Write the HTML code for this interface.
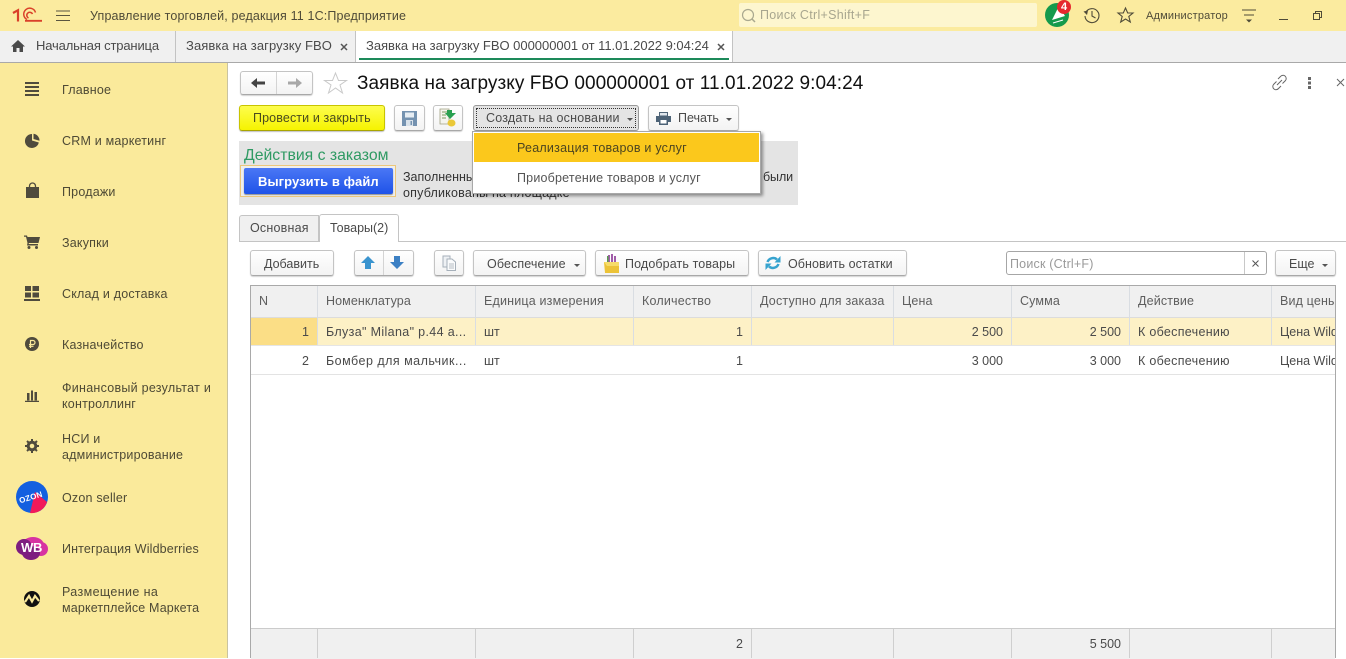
<!DOCTYPE html>
<html lang="ru"><head><meta charset="utf-8"><title>1С</title>
<style>
html,body{margin:0;padding:0}
body{width:1346px;height:658px;overflow:hidden;position:relative;background:#fff;font-family:"Liberation Sans",Arial,sans-serif;font-size:13px;color:#4a4a45}
.a{position:absolute}
.t{position:absolute;white-space:nowrap;line-height:16px}
.b{position:absolute;box-sizing:border-box;border:1px solid #c4c4c4;border-bottom-color:#a8a8a8;border-radius:3px;background:linear-gradient(#fff,#f3f3f3);box-shadow:0 1px 1px rgba(0,0,0,.18)}
.m{color:#4e4a35;font-size:12.5px;letter-spacing:.2px}
.h{color:#5e5e5e;font-size:12.5px;letter-spacing:.15px}
.c{color:#4a4a4a;font-size:12.5px}
.s{letter-spacing:.3px}
.r{text-align:right}
.v{position:absolute;width:1px}
.tr{position:absolute;width:0;height:0;border-left:3px solid transparent;border-right:3px solid transparent;border-top:3px solid #555}
svg{position:absolute;overflow:visible}
</style></head><body>

<!-- top bar -->
<div class="a" style="left:0;top:0;width:1346px;height:31px;background:#fbeb9f;border-bottom:1px solid #c9bf8a"></div>
<svg style="left:13px;top:9px" width="30" height="14" viewBox="0 0 30 14"><path d="M0 4L5 1.200V12.500" fill="none" stroke="#d9402a" stroke-width="2.200"/><path d="M22.500 3.500A6 6 0 1 0 14 10.500M19.500 5A3 3 0 1 0 15.500 9" fill="none" stroke="#d9402a" stroke-width="1.500"/><path d="M12 11.800H29" stroke="#d9402a" stroke-width="1.800"/></svg>
<svg style="left:56px;top:10px" width="15" height="12"><path d="M0 1H14M0 5.500H14M0 10.500H14" stroke="#5a5540" stroke-width="1.100"/></svg>
<div class="t" style="left:90px;top:8px;font-size:12.5px;color:#4f4b38;letter-spacing:.15px">Управление торговлей, редакция 11 1С:Предприятие</div>
<div class="a" style="left:739px;top:3px;width:298px;height:24px;background:#fdf6cf;border-radius:2px"></div>
<svg style="left:741px;top:8px" width="16" height="16"><circle cx="7" cy="7" r="5.500" fill="none" stroke="#a9a88f" stroke-width="1.200"/><path d="M11 11L14 14" stroke="#a9a88f" stroke-width="1.500"/></svg>
<div class="t" style="left:760px;top:7px;font-size:12.5px;color:#a8a68f;letter-spacing:.3px">Поиск Ctrl+Shift+F</div>
<svg style="left:1045px;top:3px" width="26" height="25"><circle cx="12" cy="12" r="12" fill="#159a4c"/><path d="M7 17L14 3L20 13Z" fill="#fff"/><path d="M8 20L18 17" stroke="#fff" stroke-width="1"/><circle cx="19" cy="4" r="7" fill="#e5282e"/></svg>
<div class="t" style="left:1061px;top:0;width:8px;font-size:11px;font-weight:bold;color:#fff;line-height:15px">4</div>
<svg style="left:1083px;top:7px" width="18" height="17"><path d="M3 5A7 7 0 1 1 2 9" fill="none" stroke="#4f4b38" stroke-width="1.100"/><path d="M0.500 4.500L5 3.500L4 8Z" fill="#4f4b38"/><path d="M9 4V9L12.500 11" fill="none" stroke="#4f4b38" stroke-width="1.100"/></svg>
<svg style="left:1117px;top:7px" width="17" height="17"><path d="M8.500 1L10.700 6H16L11.800 9.500L13.300 15L8.500 12L3.700 15L5.200 9.500L1 6H6.300Z" fill="none" stroke="#4f4b38" stroke-width="1.100"/></svg>
<div class="t" style="left:1146px;top:8px;font-size:11px;color:#4f4b38;letter-spacing:.2px">Администратор</div>
<svg style="left:1242px;top:9px" width="15" height="15"><path d="M0 1H14M2 6H12" stroke="#4f4b38" stroke-width="1.100"/><path d="M4 10.500H10L7 13.500Z" fill="#4f4b38"/></svg>
<div class="a" style="left:1279px;top:19px;width:9px;height:1px;background:#4f4b38"></div>
<svg style="left:1313px;top:11px" width="10" height="10"><path d="M2.500 2.500V.5H8.500V6.500H6.500M.5 2.500H6.500V8.500H.5Z" fill="none" stroke="#4f4b38" stroke-width="1"/></svg>

<!-- tab bar -->
<div class="a" style="left:0;top:31px;width:1346px;height:31px;background:#f0f0f0;border-bottom:1px solid #a9a9a9"></div>
<div class="a" style="left:355px;top:31px;width:377px;height:31px;background:#fff"></div>
<div class="v" style="left:175px;top:31px;height:31px;background:#c3c3c3"></div>
<div class="v" style="left:355px;top:31px;height:31px;background:#c3c3c3"></div>
<div class="v" style="left:732px;top:31px;height:31px;background:#c3c3c3"></div>
<svg style="left:11px;top:40px" width="14" height="12"><path d="M7 0L14 6.500H12V12H8.500V8H5.500V12H2V6.500H0Z" fill="#4a4a4a"/></svg>
<div class="t" style="left:36px;top:38px;color:#4a4a4a;font-size:13px;letter-spacing:-.16px">Начальная страница</div>
<div class="t" style="left:186px;top:38px;color:#4a4a4a;font-size:13px;letter-spacing:.09px">Заявка на загрузку FBO</div>
<svg style="left:340px;top:43px" width="8" height="8"><path d="M1 1L7 7M7 1L1 7" stroke="#555" stroke-width="1.500"/></svg>
<div class="t" style="left:366px;top:38px;color:#4a4a4a;font-size:13px;letter-spacing:-.02px">Заявка на загрузку FBO 000000001 от 11.01.2022 9:04:24</div>
<svg style="left:717px;top:43px" width="8" height="8"><path d="M1 1L7 7M7 1L1 7" stroke="#555" stroke-width="1.500"/></svg>
<div class="a" style="left:359px;top:58px;width:370px;height:2px;background:#1d8a5a"></div>

<!-- sidebar -->
<div class="a" style="left:0;top:63px;width:227px;height:595px;background:#faea9b;border-right:1px solid #c9c3a0"></div>
<svg style="left:25px;top:82px" width="14" height="14"><path d="M0 1H14M0 5H14M0 9H14M0 13H14" stroke="#4f4b3d" stroke-width="2"/></svg>
<div class="t m" style="left:62px;top:82px">Главное</div>
<svg style="left:25px;top:133px" width="15" height="15"><path d="M7 1V7.500L13.800 9.500A7 7 0 1 1 7 1Z M8.500 .8A6.800 6.800 0 0 1 14.500 7.800L8.500 6Z" fill="#4f4b3d"/></svg>
<div class="t m" style="left:62px;top:133px">CRM и маркетинг</div>
<svg style="left:26px;top:183px" width="13" height="15"><path d="M0 4H13V15H0Z" fill="#4f4b3d"/><path d="M3.500 5V3A3 3 0 0 1 9.500 3V5" fill="none" stroke="#4f4b3d" stroke-width="1.300"/></svg>
<div class="t m" style="left:62px;top:184px">Продажи</div>
<svg style="left:24px;top:235px" width="16" height="14"><path d="M0 .5H3L3.500 2H16L14.500 8H5L4.500 9H14V10.500H3L3.500 8L2 1.700H0Z" fill="#4f4b3d"/><circle cx="5" cy="12.500" r="1.500" fill="#4f4b3d"/><circle cx="12.500" cy="12.500" r="1.500" fill="#4f4b3d"/></svg>
<div class="t m" style="left:62px;top:235px">Закупки</div>
<svg style="left:24px;top:286px" width="16" height="15"><path d="M1 0H7V5H1ZM8.500 0H15V5H8.500ZM1 6.500H7V11.500H1ZM8.500 6.500H15V11.500H8.500ZM0 13H16V15H0Z" fill="#4f4b3d"/></svg>
<div class="t m" style="left:62px;top:286px">Склад и доставка</div>
<svg style="left:25px;top:337px" width="14" height="14"><circle cx="7" cy="7" r="7" fill="#4f4b3d"/><path d="M5.500 11V3.500H8A2 2 0 0 1 8 7.500H4M4 9.300H8.500" fill="none" stroke="#faea9b" stroke-width="1.200"/></svg>
<div class="t m" style="left:62px;top:337px">Казначейство</div>
<svg style="left:25px;top:389px" width="14" height="13"><path d="M2 4H4.500V11.500H2ZM6 1.500H8V11.500H6ZM9.500 3H12V11.500H9.500ZM0 11.800H14V13H0Z" fill="#4f4b3d"/></svg>
<div class="t m" style="left:62px;top:380px;letter-spacing:.27px">Финансовый результат и</div>
<div class="t m" style="left:62px;top:396px">контроллинг</div>
<svg style="left:25px;top:439px" width="14" height="14" viewBox="0 0 14 14"><circle cx="7" cy="7" r="3.800" fill="none" stroke="#4f4b3d" stroke-width="3"/><path d="M7 0V14M0 7H14M2 2L12 12M12 2L2 12" stroke="#4f4b3d" stroke-width="2" stroke-dasharray="2.500 9 2.500 0"/></svg>
<div class="t m" style="left:62px;top:431px">НСИ и</div>
<div class="t m" style="left:62px;top:447px">администрирование</div>
<svg style="left:16px;top:481px" width="32" height="32"><circle cx="16" cy="16" r="16" fill="#1360e0"/><path d="M19 11L31 21A16 16 0 0 1 14 32Z" fill="#f2195a"/></svg>
<div class="t" style="left:19px;top:490px;font-size:8px;font-weight:bold;color:#fff;transform:rotate(-17deg);letter-spacing:.2px">OZON</div>
<div class="t m" style="left:62px;top:490px">Ozon seller</div>
<svg style="left:16px;top:535px" width="32" height="25"><ellipse cx="17" cy="10" rx="11" ry="8" fill="#d733a2"/><ellipse cx="8" cy="12" rx="8" ry="8" fill="#7d1d80"/><ellipse cx="25" cy="14" rx="7" ry="7" fill="#d733a2"/><ellipse cx="15" cy="18" rx="9" ry="7" fill="#7d1d80"/></svg>
<div class="t" style="left:21px;top:540px;font-size:13px;font-weight:bold;color:#fff;letter-spacing:-.3px">WB</div>
<div class="t m" style="left:62px;top:541px;letter-spacing:.14px">Интеграция Wildberries</div>
<svg style="left:24px;top:591px" width="16" height="16"><circle cx="8" cy="8" r="8" fill="#111"/><path d="M1 11L5 5L8 10.500L11 5L15 10" fill="none" stroke="#faea9b" stroke-width="2.200"/></svg>
<div class="t m" style="left:62px;top:584px;letter-spacing:.38px">Размещение на</div>
<div class="t m" style="left:62px;top:600px;letter-spacing:.15px">маркетплейсе Маркета</div>

<!-- header -->
<div class="b" style="left:240px;top:71px;width:73px;height:24px"></div>
<div class="v" style="left:276px;top:72px;height:22px;background:#d4d4d4"></div>
<svg style="left:251px;top:78px" width="14" height="10"><path d="M0 5L6 0V3.500H14V6.500H6V10Z" fill="#444"/></svg>
<svg style="left:288px;top:78px" width="14" height="10"><path d="M14 5L8 0V3.500H0V6.500H8V10Z" fill="#a8a8a8"/></svg>
<svg style="left:324px;top:72px" width="23" height="22"><path d="M11.500 1L14.500 8.500H22.500L16 13L18.500 21L11.500 16L4.500 21L7 13L.5 8.500H8.500Z" fill="none" stroke="#c9c9c9" stroke-width="1"/></svg>
<div class="t" style="left:357px;top:73px;font-size:19px;line-height:22px;color:#111;letter-spacing:.07px">Заявка на загрузку FBO 000000001 от 11.01.2022 9:04:24</div>
<svg style="left:1272px;top:75px" width="15" height="15"><path d="M6 4L8.500 1.500A3 3 0 0 1 13.500 5.500L10.500 8.500M9 11L6.500 13.500A3 3 0 0 1 1.500 9.500L4.500 6.500M5 10L10 5" fill="none" stroke="#666" stroke-width="1"/></svg>
<div class="a" style="left:1308px;top:77px;width:3px;height:3px;background:#666;box-shadow:0 4.500px 0 #666,0 9px 0 #666"></div>
<svg style="left:1336px;top:78px" width="9" height="9"><path d="M1 1L8 8M8 1L1 8" stroke="#666" stroke-width="1"/></svg>

<!-- toolbar -->
<div class="a" style="left:239px;top:105px;width:146px;height:26px;box-sizing:border-box;border:1px solid #c8c400;border-bottom-color:#a9a500;border-radius:3px;background:linear-gradient(#fdfd4e,#f6f300);box-shadow:0 1px 1px rgba(0,0,0,.25)"></div>
<div class="t" style="left:253px;top:110px;font-size:12.5px;color:#4b4b1f;letter-spacing:.12px">Провести и закрыть</div>
<div class="b" style="left:394px;top:105px;width:31px;height:26px"></div>
<svg style="left:402px;top:111px" width="15" height="15"><path d="M0 0H15V15H0Z" fill="#7492b0"/><path d="M3 1.500H12V6.500H3Z" fill="#e6edf3"/><path d="M4 9H11V15H4Z" fill="#d9e2ea"/><path d="M8.500 10H10V14H8.500Z" fill="#7492b0"/></svg>
<div class="b" style="left:433px;top:105px;width:30px;height:26px"></div>
<svg style="left:440px;top:109px" width="17" height="18"><path d="M0 0H9V15H0Z" fill="#f4f4ee" stroke="#a0a080" stroke-width=".8"/><path d="M2 3H7M2 6H6M2 9H6" stroke="#7a9a60"/><path d="M7 1H12V4H16L10 10L5 4H7Z" fill="#28a050"/><ellipse cx="11.500" cy="14" rx="4" ry="3.500" fill="#eac838"/></svg>
<div class="a" style="left:473px;top:105px;width:166px;height:26px;box-sizing:border-box;border:1px solid #9a9a9a;border-radius:3px;background:#e4e4e4"></div>
<div class="a" style="left:476px;top:108px;width:160px;height:20px;box-sizing:border-box;border:1px dotted #333"></div>
<div class="t" style="left:486px;top:110px;font-size:12.5px;color:#4a4a4a;letter-spacing:.2px">Создать на основании</div>
<div class="tr" style="left:627px;top:118px"></div>
<div class="b" style="left:648px;top:105px;width:91px;height:26px"></div>
<svg style="left:656px;top:112px" width="15" height="13"><path d="M3 0H12V4H3ZM0 4H15V10H12V13H3V10H0Z" fill="#4d6377"/><path d="M4.500 8H10.500V11.500H4.500Z" fill="#fff"/><path d="M4 1H11V3.500H4Z" fill="#dfe6ec"/></svg>
<div class="t" style="left:678px;top:110px;font-size:12.5px;color:#4a4a4a">Печать</div>
<div class="tr" style="left:726px;top:118px"></div>

<!-- action group -->
<div class="a" style="left:239px;top:141px;width:559px;height:64px;background:#e4e4e4"></div>
<div class="t" style="left:244px;top:147px;font-size:15.800px;color:#2f9a63;line-height:18px">Действия с заказом</div>
<div class="a" style="left:240px;top:165px;width:156px;height:32px;box-sizing:border-box;border:1px solid #ecc77a;background:#eee"></div>
<div class="a" style="left:244px;top:168px;width:149px;height:26px;border-radius:2px;background:linear-gradient(#4a77f5,#1f53e8);box-shadow:0 1px 1px rgba(0,0,0,.4)"></div>
<div class="t" style="left:258px;top:174px;font-size:13px;font-weight:bold;color:#fff;letter-spacing:.07px">Выгрузить в файл</div>
<div class="t" style="left:403px;top:169px;width:150px;overflow:hidden;font-size:12.5px;color:#333">Заполненный файл необходимо</div>
<div class="t" style="left:763px;top:169px;font-size:12.5px;color:#333;letter-spacing:-.1px">были</div>
<div class="t" style="left:403px;top:185px;font-size:12.5px;color:#333;letter-spacing:.2px">опубликованы на площадке</div>

<!-- dropdown -->
<div class="a" style="left:472px;top:131px;width:289px;height:63px;box-sizing:border-box;border:1px solid #a8a8a8;background:#fff;box-shadow:2px 2px 3px rgba(0,0,0,.4)"></div>
<div class="a" style="left:474px;top:133px;width:285px;height:29px;background:#fbc81c"></div>
<div class="t" style="left:517px;top:140px;font-size:12.5px;color:#4c4520;letter-spacing:.23px">Реализация товаров и услуг</div>
<div class="t" style="left:517px;top:170px;font-size:12.5px;color:#555;letter-spacing:.2px">Приобретение товаров и услуг</div>

<!-- tabs -->
<div class="a" style="left:239px;top:241px;width:1107px;height:1px;background:#c4c4c4"></div>
<div class="a" style="left:239px;top:215px;width:80px;height:26px;box-sizing:border-box;border:1px solid #c4c4c4;border-bottom:0;border-radius:3px 0 0 0;background:#f0f0f0"></div>
<div class="a" style="left:319px;top:214px;width:80px;height:28px;box-sizing:border-box;border:1px solid #c4c4c4;border-bottom:0;border-radius:3px 3px 0 0;background:#fff"></div>
<div class="t" style="left:250px;top:220px;font-size:12.5px;color:#4a4a4a;letter-spacing:.2px">Основная</div>
<div class="t" style="left:330px;top:220px;font-size:12.5px;color:#4a4a4a">Товары(2)</div>

<!-- table toolbar -->
<div class="b" style="left:250px;top:250px;width:84px;height:26px"></div>
<div class="t" style="left:264px;top:256px;font-size:12.5px;color:#4a4a4a">Добавить</div>
<div class="b" style="left:354px;top:250px;width:60px;height:26px"></div>
<div class="v" style="left:383px;top:251px;height:24px;background:#d4d4d4"></div>
<svg style="left:361px;top:255px" width="14" height="15"><path d="M7 1L14 8H10V14H4V8H0Z" fill="#3a94cf"/></svg>
<svg style="left:390px;top:255px" width="14" height="15"><path d="M7 14L14 7H10V1H4V7H0Z" fill="#3c80c4"/></svg>
<div class="b" style="left:434px;top:250px;width:30px;height:26px"></div>
<svg style="left:442px;top:256px" width="15" height="15"><path d="M1 0H8V11H1Z" fill="#eef1f4" stroke="#a6b0ba"/><path d="M5 3H10L13.500 6V14.500H5Z" fill="#fafbfc" stroke="#a6b0ba"/><path d="M7 8H12M7 10H12M7 12H12" stroke="#b5bdc5"/></svg>
<div class="b" style="left:473px;top:250px;width:113px;height:26px"></div>
<div class="t" style="left:487px;top:256px;font-size:12.5px;color:#4a4a4a;letter-spacing:.1px">Обеспечение</div>
<div class="tr" style="left:574px;top:264px"></div>
<div class="b" style="left:595px;top:250px;width:154px;height:26px"></div>
<svg style="left:604px;top:253px" width="15" height="21"><path d="M4 2H6V9H4ZM7 1H9V9H7ZM10 3H12V9H10Z" fill="#a05ca8"/><path d="M3 3H4.500V9H3Z" fill="#5a9a50"/><path d="M0 9H15V20H1Z" fill="#ecc337"/><path d="M0 9L3 13H15V9Z" fill="#f6dc68"/></svg>
<div class="t" style="left:625px;top:256px;font-size:12.5px;color:#4a4a4a;letter-spacing:.12px">Подобрать товары</div>
<div class="b" style="left:758px;top:250px;width:149px;height:26px"></div>
<svg style="left:765px;top:255px" width="16" height="16"><path d="M2.500 7A6 6 0 0 1 12 4.500M13.500 9A6 6 0 0 1 4 11.500" fill="none" stroke="#36a3cf" stroke-width="2.500"/><path d="M15.500 1V7.500H9.500ZM.5 15V8.500H6.500Z" fill="#36a3cf"/></svg>
<div class="t" style="left:788px;top:256px;font-size:12.5px;color:#4a4a4a;letter-spacing:.06px">Обновить остатки</div>
<div class="a" style="left:1006px;top:251px;width:261px;height:24px;box-sizing:border-box;border:1px solid #a6a6a6;border-radius:3px;background:#fff"></div>
<div class="v" style="left:1244px;top:252px;height:22px;background:#c8c8c8"></div>
<div class="t" style="left:1010px;top:256px;font-size:12.5px;color:#9a9a9a;letter-spacing:.2px">Поиск (Ctrl+F)</div>
<svg style="left:1252px;top:260px" width="7" height="7"><path d="M.5 .5L6.500 6.500M6.500 .5L.5 6.500" stroke="#555" stroke-width="1"/></svg>
<div class="b" style="left:1275px;top:250px;width:61px;height:26px"></div>
<div class="t" style="left:1289px;top:256px;font-size:12.5px;color:#4a4a4a">Еще</div>
<div class="tr" style="left:1322px;top:264px"></div>

<!-- table -->
<div class="a" style="left:250px;top:285px;width:1086px;height:373px;box-sizing:border-box;border:1px solid #a9a9a9;border-bottom:0;background:#fff"></div>
<div class="a" style="left:251px;top:286px;width:1084px;height:31px;background:#f0f0f0"></div>
<div class="a" style="left:251px;top:318px;width:1084px;height:27px;background:#fdf1c6"></div>
<div class="a" style="left:251px;top:318px;width:66px;height:27px;background:#fbde86"></div>
<div class="a" style="left:251px;top:317px;width:1084px;height:1px;background:#dcdcdc"></div>
<div class="a" style="left:251px;top:345px;width:1084px;height:1px;background:#e5e5e5"></div>
<div class="a" style="left:251px;top:374px;width:1084px;height:1px;background:#e3e3e3"></div>
<div class="a" style="left:251px;top:628px;width:1084px;height:30px;background:#f0f0f0;border-top:1px solid #cbcbcb"></div>

<div class="v" style="left:317px;top:286px;height:59px;background:#d9dde2"></div>
<div class="v" style="left:475px;top:286px;height:59px;background:#d9dde2"></div>
<div class="v" style="left:633px;top:286px;height:59px;background:#d9dde2"></div>
<div class="v" style="left:751px;top:286px;height:59px;background:#d9dde2"></div>
<div class="v" style="left:893px;top:286px;height:59px;background:#d9dde2"></div>
<div class="v" style="left:1011px;top:286px;height:59px;background:#d9dde2"></div>
<div class="v" style="left:1129px;top:286px;height:59px;background:#d9dde2"></div>
<div class="v" style="left:1271px;top:286px;height:59px;background:#d9dde2"></div>
<div class="v" style="left:317px;top:629px;height:29px;background:#cfcfcf"></div>
<div class="v" style="left:475px;top:629px;height:29px;background:#cfcfcf"></div>
<div class="v" style="left:633px;top:629px;height:29px;background:#cfcfcf"></div>
<div class="v" style="left:751px;top:629px;height:29px;background:#cfcfcf"></div>
<div class="v" style="left:893px;top:629px;height:29px;background:#cfcfcf"></div>
<div class="v" style="left:1011px;top:629px;height:29px;background:#cfcfcf"></div>
<div class="v" style="left:1129px;top:629px;height:29px;background:#cfcfcf"></div>
<div class="v" style="left:1271px;top:629px;height:29px;background:#cfcfcf"></div>

<div class="t h" style="left:259px;top:293px">N</div>
<div class="t h" style="left:326px;top:293px;letter-spacing:.08px">Номенклатура</div>
<div class="t h" style="left:484px;top:293px;letter-spacing:.18px">Единица измерения</div>
<div class="t h" style="left:642px;top:293px;letter-spacing:.2px">Количество</div>
<div class="t h" style="left:760px;top:293px;letter-spacing:.2px">Доступно для заказа</div>
<div class="t h" style="left:902px;top:293px">Цена</div>
<div class="t h" style="left:1020px;top:293px">Сумма</div>
<div class="t h" style="left:1138px;top:293px">Действие</div>
<div class="t h" style="left:1280px;top:293px;width:55px;overflow:hidden">Вид цены</div>

<div class="t c r" style="left:259px;top:324px;width:50px">1</div>
<div class="t c" style="left:326px;top:324px;letter-spacing:.35px">Блуза" Milana" р.44 а...</div>
<div class="t c" style="left:484px;top:324px">шт</div>
<div class="t c r" style="left:693px;top:324px;width:50px">1</div>
<div class="t c r" style="left:943px;top:324px;width:60px">2 500</div>
<div class="t c r" style="left:1061px;top:324px;width:60px">2 500</div>
<div class="t c s" style="left:1138px;top:324px">К обеспечению</div>
<div class="t c" style="left:1280px;top:324px;width:55px;overflow:hidden">Цена Wildberries</div>

<div class="t c r" style="left:259px;top:353px;width:50px">2</div>
<div class="t c" style="left:326px;top:353px;letter-spacing:.48px">Бомбер для мальчик...</div>
<div class="t c" style="left:484px;top:353px">шт</div>
<div class="t c r" style="left:693px;top:353px;width:50px">1</div>
<div class="t c r" style="left:943px;top:353px;width:60px">3 000</div>
<div class="t c r" style="left:1061px;top:353px;width:60px">3 000</div>
<div class="t c s" style="left:1138px;top:353px">К обеспечению</div>
<div class="t c" style="left:1280px;top:353px;width:55px;overflow:hidden">Цена Wildberries</div>

<div class="t c r" style="left:693px;top:636px;width:50px">2</div>
<div class="t c r" style="left:1061px;top:636px;width:60px">5 500</div>

</body></html>
